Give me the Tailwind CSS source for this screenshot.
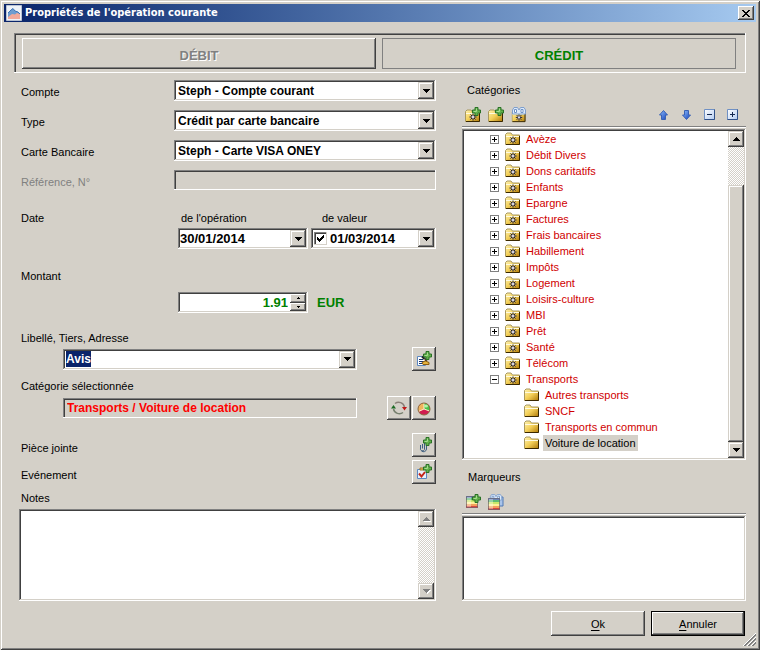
<!DOCTYPE html>
<html lang="fr">
<head>
<meta charset="utf-8">
<title>Propriétés de l'opération courante</title>
<script src="https://cdn.jsdelivr.net/npm/@tailwindcss/browser@4"></script>
</head>
<body class="bg-[#d4d0c8]">

<!-- Shared icon shapes -->
<svg class="absolute size-0" aria-hidden="true">
  <defs>
    <linearGradient id="gold" x1="0" y1="0" x2="1" y2="1"><stop offset="0" stop-color="#fff3b0"/><stop offset=".5" stop-color="#f3cf58"/><stop offset="1" stop-color="#b07a08"/></linearGradient>
    <linearGradient id="blue" x1="0" y1="0" x2="1" y2="1"><stop offset="0" stop-color="#8fc0ff"/><stop offset="1" stop-color="#1440b8"/></linearGradient>
    <linearGradient id="pane" x1="0" y1="0" x2="1" y2="1"><stop offset="0" stop-color="#ffffff"/><stop offset="1" stop-color="#b4cdf2"/></linearGradient>
    <symbol id="folder" viewBox="0 0 16 14">
      <path d="M.5 12.500V2.500L2 1h4l1.500 2H14.500v9.500z" fill="url(#gold)" stroke="#a89860"/>
      <path d="M1 4.500h13" stroke="#fffbe0"/>
      <path d="M1 12.500h13.500V4" fill="none" stroke="#3a2800"/>
    </symbol>
    <symbol id="sun" viewBox="0 0 8 8">
      <path d="M4 .5v7M.5 4h7M1.500 1.500l5 5M6.500 1.500l-5 5" stroke="#101848" stroke-width="1"/>
      <circle cx="4" cy="4" r="1.200" fill="#d8d8f0"/>
    </symbol>
    <symbol id="plus" viewBox="0 0 9 9">
      <path d="M3 .5h3V3h2.500v3H6v2.500H3V6H.5V3H3z" fill="#62b04a" stroke="#2a7226"/>
      <path d="M4.500 1.500v3H1.500" fill="none" stroke="#a5dc90"/>
    </symbol>
    <symbol id="sunfolder" viewBox="0 0 16 14"><use href="#folder" width="16" height="14"/><use href="#sun" x="4" y="4" width="8" height="8"/></symbol>
    <symbol id="binoculars" viewBox="0 0 16 8">
      <path d="M1.500 7V3L3 .5h3.500L8 3l1.500-2.500H13L14.500 3v4z" fill="#dbe9fb" stroke="#7f9fcb"/>
      <path d="M3.500 2.500h2v3h-2zM10 2.500h2v3h-2z" fill="#fff" stroke="#6e92c4"/>
    </symbol>
    <symbol id="tag" viewBox="0 0 12 12">
      <path d="M0 0h12v2H0z" fill="#6a86b8"/><path d="M0 2h12v2H0z" fill="#5fbb73"/><path d="M0 4h12v2H0z" fill="#c9e86a"/><path d="M0 6h12v2H0z" fill="#fff09a"/><path d="M0 8h12v2H0z" fill="#f4a05c"/><path d="M0 10h12v2H0z" fill="#d8453e"/>
      <path d="M1 1h4v10H1z" fill="#fff" opacity=".35"/><path d="M.5.5h11v11H.5z" fill="none" stroke="#6b6470" opacity=".7"/>
    </symbol>
    <symbol id="down" viewBox="0 0 7 4"><path d="M0 0h7v1H6v1H5v1H4v1H3V3H2V2H1V1H0z" fill="currentColor"/></symbol>
    <symbol id="up" viewBox="0 0 7 4"><path d="M3 0h1v1h1v1h1v1h1v1H0V3h1V2h1V1h1z" fill="currentColor"/></symbol>
    <symbol id="expand" viewBox="0 0 9 9" shape-rendering="crispEdges"><path d="M.5.500h8v8h-8z" fill="#fff" stroke="#808080"/><path d="M2 4.500h5M4.500 2v5" stroke="#000"/></symbol>
    <symbol id="collapse" viewBox="0 0 9 9" shape-rendering="crispEdges"><path d="M.5.500h8v8h-8z" fill="#fff" stroke="#808080"/><path d="M2 4.500h5" stroke="#000"/></symbol>
  </defs>
</svg>

<div class="min-h-screen flex flex-col p-1 bg-[#d4d0c8] text-black text-[11px] leading-4 font-['Liberation_Sans',Arial,sans-serif] shadow-[inset_1px_1px_0_#d4d0c8,inset_-1px_-1px_0_#404040,inset_2px_2px_0_#fff,inset_-2px_-2px_0_#808080]">

  <header class="h-[18px] flex items-center gap-[3px] pl-[2px] pr-[2px] bg-linear-to-r from-[#0a246a] to-[#a6caf0]">
    <svg class="size-4 shrink-0" viewBox="0 0 16 16" aria-hidden="true">
      <path d="M.5.5h15v15H.5z" fill="#eef2f8" stroke="#b9c3d3"/>
      <path d="M2 8l3-3 2-1.500L9 6l3 1 2 2v5H2z" fill="#6f9dd0"/>
      <path d="M2 12l4-3 3 .5 2-1.500 3 1v5H2z" fill="#f2a99a"/>
      <path d="M2 8l3-3 2-1.500L9 6l3 1 2 2" fill="none" stroke="#3f74b5"/>
    </svg>
    <h1 class="grow text-white font-bold text-[11px] font-['DejaVu_Sans_Condensed','Noto_Sans',sans-serif]">Propriétés de l'opération courante</h1>
    <button type="button" aria-label="Fermer" class="w-4 h-[14px] flex items-center justify-center bg-[#d4d0c8] shadow-[inset_-1px_-1px_0_#404040,inset_1px_1px_0_#fff,inset_-2px_-2px_0_#808080]">
      <svg class="w-2 h-[7px]" viewBox="0 0 8 7" shape-rendering="crispEdges"><path d="M0 0h2v1h1v1h2V1h1V0h2v1H7v1H6v1H5v1h1v1h1v1h1v1H6V6H5V5H3v1H2v1H0V6h1V5h1V4h1V3H2V2H1V1H0z"/></svg>
    </button>
  </header>

  <div class="mt-[11px] mx-[10px] h-10 pl-2 pr-[10px] pt-[5px] pb-1 grid grid-cols-2 gap-[6px] text-[13px] font-bold shadow-[inset_-1px_-1px_0_#fff,inset_1px_1px_0_#808080,inset_2px_2px_0_#404040]">
    <button type="button" class="pt-1 text-[#808080] text-shadow-[1px_1px_0_#fff] shadow-[inset_-1px_-1px_0_#404040,inset_1px_1px_0_#fff,inset_-2px_-2px_0_#808080]">DÉBIT</button>
    <button type="button" aria-pressed="true" class="pt-1 text-[#008000] border border-[#808080]">CRÉDIT</button>
  </div>

  <main class="grow mt-[7px] ml-[15px] mr-[10px] grid grid-cols-[minmax(0,417fr)_minmax(0,284fr)] gap-[26px]">

    <form class="flex flex-col">
      <div class="grid grid-cols-[155px_1fr] gap-y-[9px] items-center">
        <label for="compte" class="pt-[3px] pl-[2px]">Compte</label>
        <div class="relative flex h-[21px] p-[2px] bg-white shadow-[inset_-1px_-1px_0_#fff,inset_1px_1px_0_#808080,inset_-2px_-2px_0_#d4d0c8,inset_2px_2px_0_#404040]">
          <select id="compte" class="grow appearance-none pl-[2px] pr-4 text-[12px] leading-4 font-bold"><option>Steph - Compte courant</option></select>
          <span class="pointer-events-none absolute right-[2px] inset-y-[2px] w-4 flex items-center justify-center bg-[#d4d0c8] shadow-[inset_-1px_-1px_0_#404040,inset_1px_1px_0_#d4d0c8,inset_-2px_-2px_0_#808080,inset_2px_2px_0_#fff]"><svg class="w-[7px] h-1"><use href="#down"/></svg></span>
        </div>
        <label for="type" class="pt-[3px] pl-[2px]">Type</label>
        <div class="relative flex h-[21px] p-[2px] bg-white shadow-[inset_-1px_-1px_0_#fff,inset_1px_1px_0_#808080,inset_-2px_-2px_0_#d4d0c8,inset_2px_2px_0_#404040]">
          <select id="type" class="grow appearance-none pl-[2px] pr-4 text-[12px] leading-4 font-bold"><option>Crédit par carte bancaire</option></select>
          <span class="pointer-events-none absolute right-[2px] inset-y-[2px] w-4 flex items-center justify-center bg-[#d4d0c8] shadow-[inset_-1px_-1px_0_#404040,inset_1px_1px_0_#d4d0c8,inset_-2px_-2px_0_#808080,inset_2px_2px_0_#fff]"><svg class="w-[7px] h-1"><use href="#down"/></svg></span>
        </div>
        <label for="carte" class="pt-[3px] pl-[2px]">Carte Bancaire</label>
        <div class="relative flex h-[21px] p-[2px] bg-white shadow-[inset_-1px_-1px_0_#fff,inset_1px_1px_0_#808080,inset_-2px_-2px_0_#d4d0c8,inset_2px_2px_0_#404040]">
          <select id="carte" class="grow appearance-none pl-[2px] pr-4 text-[12px] leading-4 font-bold"><option>Steph - Carte VISA ONEY</option></select>
          <span class="pointer-events-none absolute right-[2px] inset-y-[2px] w-4 flex items-center justify-center bg-[#d4d0c8] shadow-[inset_-1px_-1px_0_#404040,inset_1px_1px_0_#d4d0c8,inset_-2px_-2px_0_#808080,inset_2px_2px_0_#fff]"><svg class="w-[7px] h-1"><use href="#down"/></svg></span>
        </div>
        <label for="ref" class="pt-[3px] pl-[2px] text-[#808080]">Référence, N°</label>
        <input id="ref" type="text" disabled class="h-5 w-full px-1 bg-[#d4d0c8] shadow-[inset_-1px_-1px_0_#fff,inset_1px_1px_0_#808080,inset_2px_2px_0_#404040]">
      </div>

      <div class="mt-5 flex">
        <span class="w-[159px] shrink-0 pl-[2px]">Date</span>
        <div class="grow min-w-0 grid grid-cols-[minmax(0,130fr)_minmax(0,125fr)] gap-x-[3px] gap-y-[2px]">
          <label for="dop" class="pl-[3px]">de l'opération</label>
          <label for="dval" class="pl-[11px]">de valeur</label>
          <div class="flex h-[21px] p-[2px] bg-white shadow-[inset_-1px_-1px_0_#fff,inset_1px_1px_0_#808080,inset_-2px_-2px_0_#d4d0c8,inset_2px_2px_0_#404040]">
            <input id="dop" type="text" value="30/01/2014" class="grow min-w-0 text-[13px] leading-4 font-bold">
            <button type="button" aria-label="Ouvrir le calendrier" class="w-4 shrink-0 flex items-center justify-center bg-[#d4d0c8] shadow-[inset_-1px_-1px_0_#404040,inset_1px_1px_0_#d4d0c8,inset_-2px_-2px_0_#808080,inset_2px_2px_0_#fff]"><svg class="w-[7px] h-1"><use href="#down"/></svg></button>
          </div>
          <div class="flex items-center h-[21px] p-[2px] bg-white shadow-[inset_-1px_-1px_0_#fff,inset_1px_1px_0_#808080,inset_-2px_-2px_0_#d4d0c8,inset_2px_2px_0_#404040]">
            <span class="relative size-[13px] shrink-0 ml-px">
              <input type="checkbox" checked aria-label="Utiliser la date de valeur" class="block appearance-none size-[13px] bg-white shadow-[inset_-1px_-1px_0_#d4d0c8,inset_1px_1px_0_#808080,inset_2px_2px_0_#404040]">
              <svg class="pointer-events-none absolute left-[3px] top-[3px] size-[7px]" viewBox="0 0 7 7" shape-rendering="crispEdges"><path d="M0 2h1v1h1v1h1V3h1V2h1V1h1V0h1v3H6v1H5v1H4v1H3v1H2V6H1V5H0z"/></svg>
            </span>
            <input id="dval" type="text" value="01/03/2014" class="grow min-w-0 pl-[3px] text-[13px] leading-4 font-bold">
            <button type="button" aria-label="Ouvrir le calendrier" class="w-4 shrink-0 self-stretch flex items-center justify-center bg-[#d4d0c8] shadow-[inset_-1px_-1px_0_#404040,inset_1px_1px_0_#d4d0c8,inset_-2px_-2px_0_#808080,inset_2px_2px_0_#fff]"><svg class="w-[7px] h-1"><use href="#down"/></svg></button>
          </div>
        </div>
      </div>

      <label for="montant" class="mt-[19px] pl-[2px]">Montant</label>
      <div class="mt-2 ml-[159px] flex items-center gap-[9px] text-[13px] font-bold text-[#008000]">
        <div class="w-[130px] flex h-[21px] p-[2px] bg-white shadow-[inset_-1px_-1px_0_#fff,inset_1px_1px_0_#808080,inset_-2px_-2px_0_#d4d0c8,inset_2px_2px_0_#404040]">
          <input id="montant" type="text" value="1.91" class="grow min-w-0 pr-[2px] text-right leading-4 font-bold">
          <span class="w-4 shrink-0 grid grid-rows-2 text-black">
            <button type="button" aria-label="Augmenter" class="flex items-center justify-center bg-[#d4d0c8] shadow-[inset_-1px_-1px_0_#404040,inset_1px_1px_0_#fff,inset_-2px_-2px_0_#808080]"><svg class="w-[3px] h-[2px]" viewBox="0 0 3 2" shape-rendering="crispEdges"><path d="M1 0h1v1h1v1H0V1h1z"/></svg></button>
            <button type="button" aria-label="Diminuer" class="flex items-center justify-center bg-[#d4d0c8] shadow-[inset_-1px_-1px_0_#404040,inset_1px_1px_0_#fff,inset_-2px_-2px_0_#808080]"><svg class="w-[3px] h-[2px]" viewBox="0 0 3 2" shape-rendering="crispEdges"><path d="M0 0h3v1H2v1H1V1H0z"/></svg></button>
          </span>
        </div>
        <span>EUR</span>
      </div>

      <label for="tiers" class="mt-[17px] pl-[2px]">Libellé, Tiers, Adresse</label>
      <div class="mt-px ml-11 flex items-center">
        <div class="grow mr-[55px] flex h-[21px] p-[2px] bg-white shadow-[inset_-1px_-1px_0_#fff,inset_1px_1px_0_#808080,inset_-2px_-2px_0_#d4d0c8,inset_2px_2px_0_#404040]">
          <input id="tiers" type="text" value="Avis" class="grow min-w-0 pl-px text-[12px] leading-4 font-bold outline-none selection:bg-[#0a246a] selection:text-white">
          <button type="button" aria-label="Afficher la liste" class="w-4 shrink-0 flex items-center justify-center bg-[#d4d0c8] shadow-[inset_-1px_-1px_0_#404040,inset_1px_1px_0_#d4d0c8,inset_-2px_-2px_0_#808080,inset_2px_2px_0_#fff]"><svg class="w-[7px] h-1"><use href="#down"/></svg></button>
        </div>
        <button type="button" aria-label="Ajouter un tiers" class="w-6 h-6 shrink-0 flex items-center justify-center shadow-[inset_-1px_-1px_0_#404040,inset_1px_1px_0_#fff,inset_-2px_-2px_0_#808080]">
          <svg class="size-4" viewBox="0 0 16 16">
            <path d="M1.500 5.500h6l2 2v7h-8z" fill="#fff" stroke="#5a86c0"/><path d="M3 8.500h4M3 10.500h5M3 12.500h5" stroke="#16346c"/>
            <path d="M6 5.500L8.500 8" stroke="#222" stroke-width="2"/>
            <path d="M6 11.500q3-3 7 0v2H7z" fill="#e4b23c" stroke="#8b5c12"/><circle cx="10" cy="8.500" r="1.500" fill="#4a3a20"/>
            <use href="#plus" x="7" y="0" width="9" height="9"/>
          </svg>
        </button>
      </div>

      <label for="cat" class="mt-[7px] pl-[2px]">Catégorie sélectionnée</label>
      <div class="mt-[2px] ml-11 flex items-center">
        <input id="cat" type="text" readonly value="Transports / Voiture de location" class="grow min-w-0 mr-[30px] h-5 pl-1 pr-1 bg-[#d4d0c8] text-[#ff0000] text-[12px] leading-4 font-bold shadow-[inset_-1px_-1px_0_#fff,inset_1px_1px_0_#808080,inset_2px_2px_0_#404040]">
        <button type="button" aria-label="Réinitialiser la catégorie" class="w-6 h-6 mr-px shrink-0 flex items-center justify-center shadow-[inset_-1px_-1px_0_#404040,inset_1px_1px_0_#fff,inset_-2px_-2px_0_#808080]">
          <svg class="size-4" viewBox="0 0 16 16" fill="none">
            <path d="M4 3.500A6 6 0 0 1 13.500 7" stroke="#8a7f78" stroke-width="1.500"/><path d="M12 12.500A6 6 0 0 1 2.500 9" stroke="#77806f" stroke-width="1.500"/>
            <path d="M11 7h5l-2.500 3.500z" fill="#c01818"/><path d="M0 8.500h5L2.500 5z" fill="#1c6a24"/>
          </svg>
        </button>
        <button type="button" aria-label="Répartition par catégories" class="w-6 h-6 shrink-0 flex items-center justify-center shadow-[inset_-1px_-1px_0_#404040,inset_1px_1px_0_#fff,inset_-2px_-2px_0_#808080]">
          <svg class="size-[14px] mt-[2px]" viewBox="0 0 14 14">
            <circle cx="7" cy="7" r="6" fill="#d01c50"/><path d="M7 7V1A6 6 0 0 1 12.500 9z" fill="#46c24a"/><path d="M7 7V1A6 6 0 0 0 1.500 9.500z" fill="#f0b45c"/>
            <path d="M7 7V1M7 7l5.500 2M7 7L1.500 9.500" stroke="#fff3c8"/><ellipse cx="9" cy="4" rx="2" ry="1.500" fill="#b8f0a8"/><circle cx="7" cy="7" r="6" fill="none" stroke="#8a6a40"/>
          </svg>
        </button>
      </div>

      <div class="mt-[13px] flex items-center justify-between">
        <label for="piece" class="pt-[6px] pl-[2px]">Pièce jointe</label>
        <button id="piece" type="button" class="w-6 h-6 flex items-center justify-center shadow-[inset_-1px_-1px_0_#404040,inset_1px_1px_0_#fff,inset_-2px_-2px_0_#808080]">
          <svg class="size-4" viewBox="0 0 16 16">
            <path d="M4.500 8v3a2 2 0 0 0 4 1.500V5.500M6.500 7v4.500M10.500 7v5a3 3 0 0 1-5 2" fill="none" stroke="#3f5f80"/>
            <use href="#plus" x="7" y="0" width="9" height="9"/>
          </svg>
        </button>
      </div>
      <div class="mt-[3px] flex items-center justify-between">
        <label for="event" class="pt-[6px] pl-[2px]">Evénement</label>
        <button id="event" type="button" class="w-6 h-6 flex items-center justify-center shadow-[inset_-1px_-1px_0_#404040,inset_1px_1px_0_#fff,inset_-2px_-2px_0_#808080]">
          <svg class="size-4" viewBox="0 0 16 16">
            <path d="M1.500 5.500h9v9h-9z" fill="#e9f0fa" stroke="#5a86c0"/><path d="M4 4h4v2H4z" fill="#e8c46a" stroke="#9a7420"/>
            <path d="M3 9.500l2.500 3L9 8" fill="none" stroke="#c42418" stroke-width="2"/>
            <use href="#plus" x="7" y="0" width="9" height="9"/>
          </svg>
        </button>
      </div>

      <label for="notes" class="mt-[6px] pl-[2px]">Notes</label>
      <div class="mt-[3px] grow flex min-h-[91px] p-[2px] bg-white shadow-[inset_-1px_-1px_0_#fff,inset_1px_1px_0_#808080,inset_-2px_-2px_0_#d4d0c8,inset_2px_2px_0_#404040]">
        <textarea id="notes" class="grow min-w-0 resize-none px-1"></textarea>
        <div class="w-4 flex flex-col justify-between text-[#808080] bg-[repeating-conic-gradient(#ffffff_0_25%,#d4d0c8_0_50%)] bg-size-[2px_2px]">
          <button type="button" disabled aria-label="Défiler vers le haut" class="h-4 flex items-center justify-center bg-[#d4d0c8] shadow-[inset_-1px_-1px_0_#404040,inset_1px_1px_0_#d4d0c8,inset_-2px_-2px_0_#808080,inset_2px_2px_0_#fff]"><svg class="w-[7px] h-1 drop-shadow-[1px_1px_0_#fff]"><use href="#up"/></svg></button>
          <button type="button" disabled aria-label="Défiler vers le bas" class="h-4 flex items-center justify-center bg-[#d4d0c8] shadow-[inset_-1px_-1px_0_#404040,inset_1px_1px_0_#d4d0c8,inset_-2px_-2px_0_#808080,inset_2px_2px_0_#fff]"><svg class="w-[7px] h-1 drop-shadow-[1px_1px_0_#fff]"><use href="#down"/></svg></button>
        </div>
      </div>
    </form>

    <section class="flex flex-col pt-[2px]">
      <h2 class="pl-[5px]">Catégories</h2>
      <div class="mt-[9px] h-5 pl-[3px] pr-[6px] flex gap-[7px] border-b border-[#808080] shadow-[0_1px_0_#fff]">
        <button type="button" aria-label="Ajouter une catégorie" class="size-4">
          <svg class="size-4" viewBox="0 0 16 16"><use href="#sunfolder" x="0" y="2" width="16" height="14"/><use href="#plus" x="7" y="0" width="9" height="9"/></svg>
        </button>
        <button type="button" aria-label="Ajouter une sous-catégorie" class="size-4">
          <svg class="size-4" viewBox="0 0 16 16"><use href="#folder" x="0" y="2" width="16" height="14"/><use href="#plus" x="7" y="0" width="9" height="9"/></svg>
        </button>
        <button type="button" aria-label="Rechercher une catégorie" class="size-4 mr-auto">
          <svg class="size-4" viewBox="0 0 16 16"><use href="#sunfolder" x="0" y="3" width="16" height="13"/><use href="#binoculars" x="0" y="0" width="16" height="8"/></svg>
        </button>
        <button type="button" aria-label="Monter" class="size-4"><svg class="size-4" viewBox="0 0 16 16"><path d="M8.500 3.500l4 4.500h-2v4.500h-4V8h-2z" fill="url(#blue)" stroke="#3a62b4"/></svg></button>
        <button type="button" aria-label="Descendre" class="size-4"><svg class="size-4" viewBox="0 0 16 16"><path d="M8.500 12.500l4-4.500h-2V3.500h-4V8h-2z" fill="url(#blue)" stroke="#3a62b4"/></svg></button>
        <button type="button" aria-label="Tout réduire" class="size-4"><svg class="size-4" viewBox="0 0 16 16"><path d="M3.500 2.500h10v10h-10z" fill="url(#pane)" stroke="#6f90c4"/><path d="M3.500 12.500h10v-10" fill="none" stroke="#2f5088"/><path d="M6 7.500h5" stroke="#142850"/></svg></button>
        <button type="button" aria-label="Tout développer" class="size-4"><svg class="size-4" viewBox="0 0 16 16"><path d="M3.500 2.500h10v10h-10z" fill="url(#pane)" stroke="#6f90c4"/><path d="M3.500 12.500h10v-10" fill="none" stroke="#2f5088"/><path d="M6 7.500h5M8.500 5v5" stroke="#142850"/></svg></button>
      </div>

      <div class="mt-[2px] flex p-[2px] bg-white shadow-[inset_-1px_-1px_0_#fff,inset_1px_1px_0_#808080,inset_-2px_-2px_0_#d4d0c8,inset_2px_2px_0_#404040]">
        <ul class="grow pl-[26px] pb-[7px] text-[#d00000] whitespace-nowrap">
          <li class="flex h-4 items-center"><button type="button" aria-label="Développer" class="size-[9px]"><svg class="size-[9px]"><use href="#expand"/></svg></button><svg class="w-4 h-[14px] ml-[6px] mr-[5px]"><use href="#sunfolder"/></svg>Avèze</li>
          <li class="flex h-4 items-center"><button type="button" aria-label="Développer" class="size-[9px]"><svg class="size-[9px]"><use href="#expand"/></svg></button><svg class="w-4 h-[14px] ml-[6px] mr-[5px]"><use href="#sunfolder"/></svg>Débit Divers</li>
          <li class="flex h-4 items-center"><button type="button" aria-label="Développer" class="size-[9px]"><svg class="size-[9px]"><use href="#expand"/></svg></button><svg class="w-4 h-[14px] ml-[6px] mr-[5px]"><use href="#sunfolder"/></svg>Dons caritatifs</li>
          <li class="flex h-4 items-center"><button type="button" aria-label="Développer" class="size-[9px]"><svg class="size-[9px]"><use href="#expand"/></svg></button><svg class="w-4 h-[14px] ml-[6px] mr-[5px]"><use href="#sunfolder"/></svg>Enfants</li>
          <li class="flex h-4 items-center"><button type="button" aria-label="Développer" class="size-[9px]"><svg class="size-[9px]"><use href="#expand"/></svg></button><svg class="w-4 h-[14px] ml-[6px] mr-[5px]"><use href="#sunfolder"/></svg>Epargne</li>
          <li class="flex h-4 items-center"><button type="button" aria-label="Développer" class="size-[9px]"><svg class="size-[9px]"><use href="#expand"/></svg></button><svg class="w-4 h-[14px] ml-[6px] mr-[5px]"><use href="#sunfolder"/></svg>Factures</li>
          <li class="flex h-4 items-center"><button type="button" aria-label="Développer" class="size-[9px]"><svg class="size-[9px]"><use href="#expand"/></svg></button><svg class="w-4 h-[14px] ml-[6px] mr-[5px]"><use href="#sunfolder"/></svg>Frais bancaires</li>
          <li class="flex h-4 items-center"><button type="button" aria-label="Développer" class="size-[9px]"><svg class="size-[9px]"><use href="#expand"/></svg></button><svg class="w-4 h-[14px] ml-[6px] mr-[5px]"><use href="#sunfolder"/></svg>Habillement</li>
          <li class="flex h-4 items-center"><button type="button" aria-label="Développer" class="size-[9px]"><svg class="size-[9px]"><use href="#expand"/></svg></button><svg class="w-4 h-[14px] ml-[6px] mr-[5px]"><use href="#sunfolder"/></svg>Impôts</li>
          <li class="flex h-4 items-center"><button type="button" aria-label="Développer" class="size-[9px]"><svg class="size-[9px]"><use href="#expand"/></svg></button><svg class="w-4 h-[14px] ml-[6px] mr-[5px]"><use href="#sunfolder"/></svg>Logement</li>
          <li class="flex h-4 items-center"><button type="button" aria-label="Développer" class="size-[9px]"><svg class="size-[9px]"><use href="#expand"/></svg></button><svg class="w-4 h-[14px] ml-[6px] mr-[5px]"><use href="#sunfolder"/></svg>Loisirs-culture</li>
          <li class="flex h-4 items-center"><button type="button" aria-label="Développer" class="size-[9px]"><svg class="size-[9px]"><use href="#expand"/></svg></button><svg class="w-4 h-[14px] ml-[6px] mr-[5px]"><use href="#sunfolder"/></svg>MBI</li>
          <li class="flex h-4 items-center"><button type="button" aria-label="Développer" class="size-[9px]"><svg class="size-[9px]"><use href="#expand"/></svg></button><svg class="w-4 h-[14px] ml-[6px] mr-[5px]"><use href="#sunfolder"/></svg>Prêt</li>
          <li class="flex h-4 items-center"><button type="button" aria-label="Développer" class="size-[9px]"><svg class="size-[9px]"><use href="#expand"/></svg></button><svg class="w-4 h-[14px] ml-[6px] mr-[5px]"><use href="#sunfolder"/></svg>Santé</li>
          <li class="flex h-4 items-center"><button type="button" aria-label="Développer" class="size-[9px]"><svg class="size-[9px]"><use href="#expand"/></svg></button><svg class="w-4 h-[14px] ml-[6px] mr-[5px]"><use href="#sunfolder"/></svg>Télécom</li>
          <li>
            <div class="flex h-4 items-center"><button type="button" aria-label="Réduire" class="size-[9px]"><svg class="size-[9px]"><use href="#collapse"/></svg></button><svg class="w-4 h-[14px] ml-[6px] mr-[5px]"><use href="#sunfolder"/></svg>Transports</div>
            <ul class="pl-[34px]">
              <li class="flex h-4 items-center gap-[3px]"><svg class="w-4 h-[14px] shrink-0"><use href="#folder"/></svg><span class="px-[2px]">Autres transports</span></li>
              <li class="flex h-4 items-center gap-[3px]"><svg class="w-4 h-[14px] shrink-0"><use href="#folder"/></svg><span class="px-[2px]">SNCF</span></li>
              <li class="flex h-4 items-center gap-[3px]"><svg class="w-4 h-[14px] shrink-0"><use href="#folder"/></svg><span class="px-[2px]">Transports en commun</span></li>
              <li class="flex h-4 items-center gap-[3px]"><svg class="w-4 h-[14px] shrink-0"><use href="#folder"/></svg><span class="px-[2px] bg-[#d4d0c8] text-black">Voiture de location</span></li>
            </ul>
          </li>
        </ul>
        <div class="w-4 flex flex-col bg-[repeating-conic-gradient(#ffffff_0_25%,#d4d0c8_0_50%)] bg-size-[2px_2px]">
          <button type="button" aria-label="Défiler vers le haut" class="h-4 flex items-center justify-center bg-[#d4d0c8] shadow-[inset_-1px_-1px_0_#404040,inset_1px_1px_0_#d4d0c8,inset_-2px_-2px_0_#808080,inset_2px_2px_0_#fff]"><svg class="w-[7px] h-1"><use href="#up"/></svg></button>
          <div class="mt-[38px] grow bg-[#d4d0c8] shadow-[inset_-1px_-1px_0_#404040,inset_1px_1px_0_#d4d0c8,inset_-2px_-2px_0_#808080,inset_2px_2px_0_#fff]"></div>
          <button type="button" aria-label="Défiler vers le bas" class="h-4 flex items-center justify-center bg-[#d4d0c8] shadow-[inset_-1px_-1px_0_#404040,inset_1px_1px_0_#d4d0c8,inset_-2px_-2px_0_#808080,inset_2px_2px_0_#fff]"><svg class="w-[7px] h-1"><use href="#down"/></svg></button>
        </div>
      </div>

      <h2 class="mt-[9px] pl-[6px]">Marqueurs</h2>
      <div class="mt-[9px] h-5 pl-[3px] flex gap-[7px] border-b border-[#808080] shadow-[0_1px_0_#fff]">
        <button type="button" aria-label="Ajouter un marqueur" class="size-4">
          <svg class="size-4" viewBox="0 0 16 16"><use href="#tag" x="1" y="2" width="12" height="12"/><use href="#plus" x="7" y="0" width="9" height="9"/></svg>
        </button>
        <button type="button" aria-label="Rechercher un marqueur" class="size-4">
          <svg class="size-4" viewBox="0 0 16 16"><path d="M11 3h4v9h-4z" fill="#a9c4ea" stroke="#4f78b4"/><use href="#binoculars" x="0" y="0" width="16" height="7"/><use href="#tag" x="0" y="4" width="12" height="12"/></svg>
        </button>
      </div>
      <div class="mt-[2px] grow min-h-[85px] bg-white shadow-[inset_-1px_-1px_0_#fff,inset_1px_1px_0_#808080,inset_-2px_-2px_0_#d4d0c8,inset_2px_2px_0_#404040]"></div>
    </section>
  </main>

  <footer class="relative mt-[10px] mr-[11px] pb-[10px] flex justify-end gap-[6px]">
    <button type="button" class="w-[94px] h-[25px] shadow-[inset_-1px_-1px_0_#404040,inset_1px_1px_0_#fff,inset_-2px_-2px_0_#808080]"><span class="underline underline-offset-2">O</span>k</button>
    <button type="button" class="w-[94px] h-[25px] border border-black shadow-[inset_-1px_-1px_0_#404040,inset_1px_1px_0_#fff,inset_-2px_-2px_0_#808080]"><span class="underline underline-offset-2">A</span>nnuler</button>
    <svg class="absolute -right-[11px] bottom-0 size-[14px]" viewBox="0 0 14 14" fill="none" aria-hidden="true">
      <path d="M1 14L14 1M5 14l9-9M9 14l5-5" stroke="#fff"/><path d="M2 14L14 2M3 14L14 3M6 14l8-8M7 14l7-7M10 14l4-4M11 14l3-3" stroke="#808080"/>
    </svg>
  </footer>
</div>

<script>
  const tiers = document.getElementById('tiers');
  tiers.focus();
  tiers.select();
</script>
</body>
</html>
